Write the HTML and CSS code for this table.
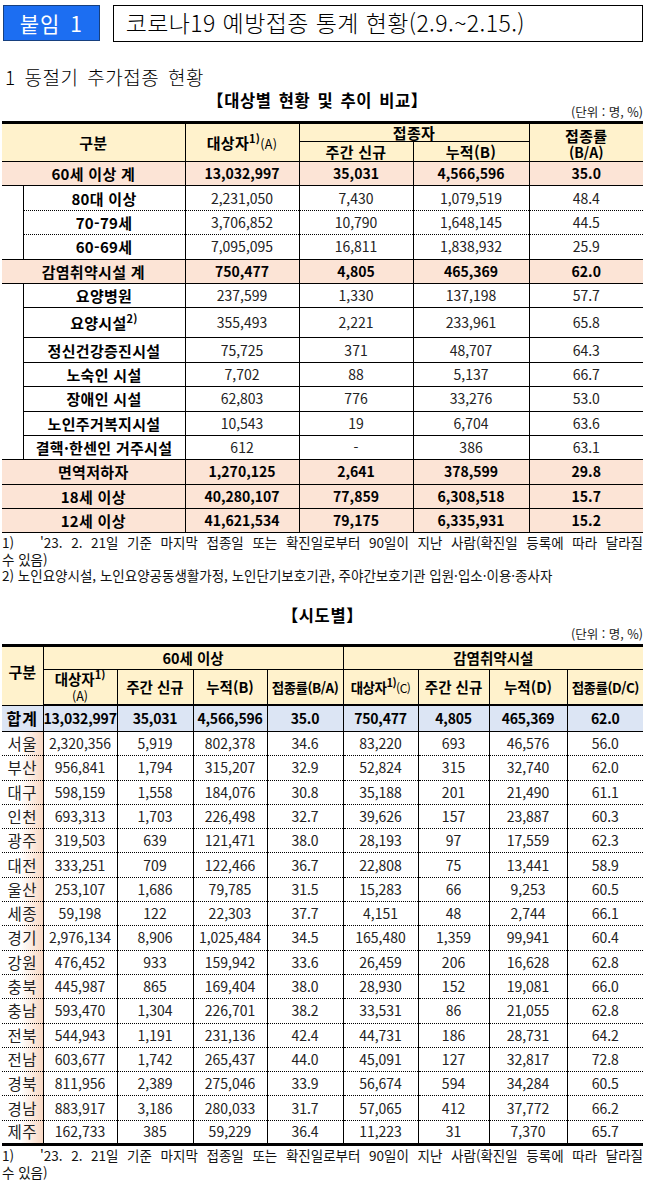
FILE: index.html
```html
<!DOCTYPE html>
<html lang="ko">
<head>
<meta charset="utf-8">
<title>코로나19 예방접종 통계 현황</title>
<link rel="stylesheet" href="styles.css">
</head>
<body>
<div class="page">
  <div class="top">
    <div class="badge">붙임 1</div>
    <div class="title">코로나19 예방접종 통계 현황(2.9.~2.15.)</div>
  </div>
  <div class="section">1 동절기 추가접종 현황</div>
  <div class="caption">【대상별 현황 및 추이 비교】</div>
  <div class="unit u1">(단위 : 명, %)</div>

  <table class="t1">
    <colgroup>
      <col style="width:21px"><col style="width:162px"><col style="width:114px"><col style="width:114px"><col style="width:116px"><col style="width:114px">
    </colgroup>
    <thead>
      <tr class="h1">
        <th colspan="2" rowspan="2" class="ko">구분</th>
        <th rowspan="2" class="ko">대상자<sup>1)</sup><span class="lat">(A)</span></th>
        <th colspan="2" class="ko">접종자</th>
        <th rowspan="2" class="twoline"><div class="ko">접종률</div><div>(B/A)</div></th>
      </tr>
      <tr class="h2">
        <th class="ko">주간 신규</th>
        <th class="ko">누적(B)</th>
      </tr>
    </thead>
    <tbody>
      <tr class="sum"><td colspan="2" class="ko">60세 이상 계</td><td>13,032,997</td><td>35,031</td><td>4,566,596</td><td>35.0</td></tr>
      <tr class="dr"><td class="blank" rowspan="3"></td><td class="lb">80대 이상</td><td>2,231,050</td><td>7,430</td><td>1,079,519</td><td>48.4</td></tr>
      <tr class="dr"><td class="lb">70-79세</td><td>3,706,852</td><td>10,790</td><td>1,648,145</td><td>44.5</td></tr>
      <tr class="dr"><td class="lb">60-69세</td><td>7,095,095</td><td>16,811</td><td>1,838,932</td><td>25.9</td></tr>
      <tr class="sum"><td colspan="2" class="ko">감염취약시설 계</td><td>750,477</td><td>4,805</td><td>465,369</td><td>62.0</td></tr>
      <tr><td class="blank" rowspan="7"></td><td class="lb">요양병원</td><td>237,599</td><td>1,330</td><td>137,198</td><td>57.7</td></tr>
      <tr class="tall"><td class="lb">요양시설<sup>2)</sup></td><td>355,493</td><td>2,221</td><td>233,961</td><td>65.8</td></tr>
      <tr><td class="lb">정신건강증진시설</td><td>75,725</td><td>371</td><td>48,707</td><td>64.3</td></tr>
      <tr><td class="lb">노숙인 시설</td><td>7,702</td><td>88</td><td>5,137</td><td>66.7</td></tr>
      <tr><td class="lb">장애인 시설</td><td>62,803</td><td>776</td><td>33,276</td><td>53.0</td></tr>
      <tr><td class="lb">노인주거복지시설</td><td>10,543</td><td>19</td><td>6,704</td><td>63.6</td></tr>
      <tr><td class="lb">결핵·한센인 거주시설</td><td>612</td><td>-</td><td>386</td><td>63.1</td></tr>
      <tr class="sum"><td colspan="2" class="ko">면역저하자</td><td>1,270,125</td><td>2,641</td><td>378,599</td><td>29.8</td></tr>
      <tr class="sum"><td colspan="2" class="ko">18세 이상</td><td>40,280,107</td><td>77,859</td><td>6,308,518</td><td>15.7</td></tr>
      <tr class="sum"><td colspan="2" class="ko">12세 이상</td><td>41,621,534</td><td>79,175</td><td>6,335,931</td><td>15.2</td></tr>
    </tbody>
  </table>

  <div class="notes n1">
    <div class="fn-j">1)&nbsp;&nbsp;&nbsp;'23. 2. 21일 기준 마지막 접종일 또는 확진일로부터 90일이 지난 사람(확진일 등록에 따라 달라질</div>
    <div>수 있음)</div>
    <div>2) 노인요양시설, 노인요양공동생활가정, 노인단기보호기관, 주야간보호기관 입원·입소·이용·종사자</div>
  </div>

  <div class="caption c2">【시도별】</div>
  <div class="unit u2">(단위 : 명, %)</div>

  <table class="t2">
    <colgroup>
      <col style="width:41px"><col style="width:74px"><col style="width:76px"><col style="width:74px"><col style="width:76px"><col style="width:75px"><col style="width:71px"><col style="width:78px"><col style="width:76px">
    </colgroup>
    <thead>
      <tr class="h1">
        <th rowspan="2" class="gb">구분</th>
        <th colspan="4">60세 이상</th>
        <th colspan="4">감염취약시설</th>
      </tr>
      <tr class="h2">
        <th class="twoline">대상자<sup>1)</sup><br><span class="lat">(A)</span></th>
        <th>주간 신규</th>
        <th>누적(B)</th>
        <th class="tight">접종률(B/A)</th>
        <th class="tight">대상자<sup>1)</sup><span class="lat">(C)</span></th>
        <th>주간 신규</th>
        <th>누적(D)</th>
        <th class="tight">접종률(D/C)</th>
      </tr>
    </thead>
    <tbody>
      <tr class="total"><td class="tn">합계</td><td>13,032,997</td><td>35,031</td><td>4,566,596</td><td>35.0</td><td>750,477</td><td>4,805</td><td>465,369</td><td>62.0</td></tr>
      <tr class="rg"><td class="rn">서울</td><td>2,320,356</td><td>5,919</td><td>802,378</td><td>34.6</td><td>83,220</td><td>693</td><td>46,576</td><td>56.0</td></tr>
      <tr class="rg"><td class="rn">부산</td><td>956,841</td><td>1,794</td><td>315,207</td><td>32.9</td><td>52,824</td><td>315</td><td>32,740</td><td>62.0</td></tr>
      <tr class="rg"><td class="rn">대구</td><td>598,159</td><td>1,558</td><td>184,076</td><td>30.8</td><td>35,188</td><td>201</td><td>21,490</td><td>61.1</td></tr>
      <tr class="rg"><td class="rn">인천</td><td>693,313</td><td>1,703</td><td>226,498</td><td>32.7</td><td>39,626</td><td>157</td><td>23,887</td><td>60.3</td></tr>
      <tr class="rg"><td class="rn">광주</td><td>319,503</td><td>639</td><td>121,471</td><td>38.0</td><td>28,193</td><td>97</td><td>17,559</td><td>62.3</td></tr>
      <tr class="rg"><td class="rn">대전</td><td>333,251</td><td>709</td><td>122,466</td><td>36.7</td><td>22,808</td><td>75</td><td>13,441</td><td>58.9</td></tr>
      <tr class="rg"><td class="rn">울산</td><td>253,107</td><td>1,686</td><td>79,785</td><td>31.5</td><td>15,283</td><td>66</td><td>9,253</td><td>60.5</td></tr>
      <tr class="rg"><td class="rn">세종</td><td>59,198</td><td>122</td><td>22,303</td><td>37.7</td><td>4,151</td><td>48</td><td>2,744</td><td>66.1</td></tr>
      <tr class="rg"><td class="rn">경기</td><td>2,976,134</td><td>8,906</td><td>1,025,484</td><td>34.5</td><td>165,480</td><td>1,359</td><td>99,941</td><td>60.4</td></tr>
      <tr class="rg"><td class="rn">강원</td><td>476,452</td><td>933</td><td>159,942</td><td>33.6</td><td>26,459</td><td>206</td><td>16,628</td><td>62.8</td></tr>
      <tr class="rg"><td class="rn">충북</td><td>445,987</td><td>865</td><td>169,404</td><td>38.0</td><td>28,930</td><td>152</td><td>19,081</td><td>66.0</td></tr>
      <tr class="rg"><td class="rn">충남</td><td>593,470</td><td>1,304</td><td>226,701</td><td>38.2</td><td>33,531</td><td>86</td><td>21,055</td><td>62.8</td></tr>
      <tr class="rg"><td class="rn">전북</td><td>544,943</td><td>1,191</td><td>231,136</td><td>42.4</td><td>44,731</td><td>186</td><td>28,731</td><td>64.2</td></tr>
      <tr class="rg"><td class="rn">전남</td><td>603,677</td><td>1,742</td><td>265,437</td><td>44.0</td><td>45,091</td><td>127</td><td>32,817</td><td>72.8</td></tr>
      <tr class="rg"><td class="rn">경북</td><td>811,956</td><td>2,389</td><td>275,046</td><td>33.9</td><td>56,674</td><td>594</td><td>34,284</td><td>60.5</td></tr>
      <tr class="rg"><td class="rn">경남</td><td>883,917</td><td>3,186</td><td>280,033</td><td>31.7</td><td>57,065</td><td>412</td><td>37,772</td><td>66.2</td></tr>
      <tr class="rg last"><td class="rn">제주</td><td>162,733</td><td>385</td><td>59,229</td><td>36.4</td><td>11,223</td><td>31</td><td>7,370</td><td>65.7</td></tr>
    </tbody>
  </table>

  <div class="notes n2">
    <div class="fn-j">1)&nbsp;&nbsp;&nbsp;'23. 2. 21일 기준 마지막 접종일 또는 확진일로부터 90일이 지난 사람(확진일 등록에 따라 달라질</div>
    <div>수 있음)</div>
  </div>
</div>
</body>
</html>
```

FILE: styles.css
```css
* { box-sizing: border-box; }

html, body {
  margin: 0;
  padding: 0;
  background: #fff;
}

body {
  font-family: "Noto Sans CJK KR", "Noto Sans", sans-serif;
  color: #000;
}

.page {
  width: 641px;
  margin-left: 2px;
}

/* header */
.top {
  display: flex;
  align-items: flex-start;
  padding-top: 5px;
}

.badge {
  margin-left: 1px;
  width: 97px;
  height: 36px;
  background: #1c6ef2;
  border: 1px solid #17407f;
  color: #fff;
  font-size: 21px;
  line-height: 34px;
  text-align: center;
  letter-spacing: 1px;
  word-spacing: 3px;
}

.title {
  margin-left: 13px;
  width: 532px;
  height: 37px;
  border: 1.5px solid #000;
  font-size: 23px;
  font-weight: 300;
  line-height: 33px;
  padding-left: 12px;
  letter-spacing: 0.4px;
}

.section {
  margin-top: 24px;
  margin-left: 3px;
  font-size: 19px;
  font-weight: 300;
  line-height: 22px;
  letter-spacing: 0.5px;
  word-spacing: 3px;
}

.caption {
  margin-top: 2px;
  text-align: center;
  font-size: 16.5px;
  font-weight: 700;
  line-height: 20px;
  padding-right: 10px;
  letter-spacing: 0.6px;
  word-spacing: 2px;
}

.unit {
  text-align: right;
  font-size: 12.5px;
  line-height: 14px;
  color: #222;
}

.u1 { margin-top: -5px; margin-bottom: 2px; }

/* tables */
table {
  border-collapse: collapse;
  table-layout: fixed;
  width: 641px;
  border-left: hidden;
  border-right: hidden;
}

th, td {
  border: 1px solid #000;
  padding: 0;
  text-align: center;
  white-space: nowrap;
}

th {
  background: #fff2cc;
  font-weight: 700;
}

sup {
  font-size: 11px;
  line-height: 0;
  vertical-align: 6px;
  font-weight: 700;
}

.lat {
  font-size: 12.5px;
  font-weight: 400;
}

/* table 1 */
.t1 {
  border-top: 3px solid #000;
  font-size: 14px;
}

.t1 th {
  font-size: 14px;
  line-height: 17px;
}

.t1 .ko { font-size: 15px; letter-spacing: 0.3px; }

.t1 .h1 th { height: 19px; }
.t1 .h2 th { height: 20px; }

.t1 .twoline { line-height: 17px; padding-top: 2px; }
.t1 .twoline div { line-height: 17px; }

.t1 td {
  height: 24.4px;
  line-height: 17px;
  color: #222;
}

.t1 .tall td { height: 30px; }

.t1 .sum td {
  background: #fce4d6;
  font-weight: 700;
  color: #000;
}

.t1 .lb {
  font-weight: 700;
  font-size: 15px;
  letter-spacing: 0.3px;
  color: #000;
}

.t1 .blank {
  background: #fff;
}

.t1 .dr td {
  border-top-style: dotted;
  border-bottom-style: dotted;
}

/* notes */
.notes {
  font-size: 13.5px;
  line-height: 16.5px;
  color: #111;
  padding-top: 1px;
}

.fn-j {
  text-align: justify;
  text-align-last: justify;
  white-space: nowrap;
}

.c2 {
  margin-top: 21px;
  padding-right: 0;
}

.u2 { margin-top: 2px; margin-bottom: 3px; }

/* table 2 */
.t2 {
  border-top: 3px solid #000;
  border-bottom: 3px solid #000;
  font-size: 14px;
}

.t2 th {
  font-size: 14.5px;
  line-height: 16px;
}

.t2 .h1 th { height: 24px; }
.t2 .h2 th {
  height: 36px;
  border-bottom: 2px solid #000;
}

.t2 .gb {
  vertical-align: middle;
  padding-bottom: 8px;
  font-size: 15px;
}

.t2 .tight {
  font-size: 13.5px;
  letter-spacing: -0.5px;
}

.t2 .tight .lat { font-size: 12px; }

.t2 .twoline { line-height: 16px; }

.t2 td {
  height: 24.3px;
  line-height: 17px;
  color: #222;
}

.t2 .total td {
  height: 26px;
  background: #dce5f4;
  font-weight: 700;
  color: #000;
  letter-spacing: -0.2px;
}

.t2 .total .tn { font-size: 16px; letter-spacing: 1px; }

.t2 .rg td {
  border-top-style: dotted;
  border-bottom-style: dotted;
}

.t2 .rg .rn {
  font-size: 15.5px;
  color: #222;
  letter-spacing: 0.5px;
  background: linear-gradient(90deg, #fff 0%, #fff 45%, #f8d7c2 100%);
}

.n2 { padding-top: 1px; }
```
